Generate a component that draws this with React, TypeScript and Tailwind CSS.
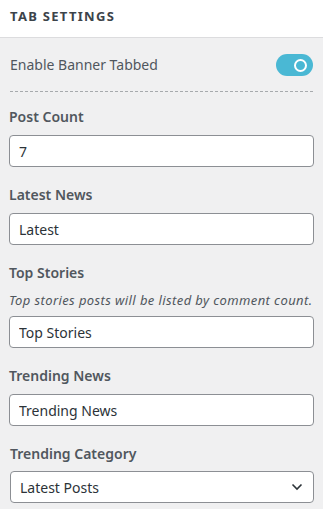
import { useState } from "react";

function Field({ label, value, desc }: { label: string; value: string; desc?: string }) {
    const [val, setVal] = useState(value);
    return (
        <div className="mt-[18px]">
            <div className="text-[14px] leading-[20px] font-semibold text-[#50575e]">{label}</div>
            {desc && (
                <div className="mt-[8px] text-[13px] leading-[18px] italic tracking-[0.4px] text-[#50575e] whitespace-nowrap">
                    {desc}
                </div>
            )}
            <input
                value={val}
                onChange={(e) => setVal(e.target.value)}
                className={`${desc ? "mt-[7px]" : "mt-[8px]"} block w-full h-[32px] px-[9px] bg-white border border-[#8c8f94] rounded-[4px] text-[14px] text-[#2c3338] outline-none`}
            />
        </div>
    );
}

export default function App() {
    const [on, setOn] = useState(true);

    return (
        <div className="w-[323px] h-[509px] bg-[#f0f0f1] overflow-hidden font-['Noto_Sans',sans-serif]">
            <div className="h-[38px] bg-white border-b border-[#dcdcde] px-[10px] pt-[7px]">
                <h2 className="text-[13px] leading-[18px] font-bold tracking-[1.3px] text-[#3c434a]">TAB SETTINGS</h2>
            </div>

            <div className="px-[10px]">
                <div className="pt-[16px] pb-[15px] border-b border-dashed border-[#a7aaad] flex items-center justify-between">
                    <span className="text-[14px] leading-[22px] text-[#50575e]">Enable Banner Tabbed</span>
                    <button
                        onClick={() => setOn(!on)}
                        className={`w-[37px] h-[22px] rounded-full flex items-center px-[6px] ${on ? "bg-[#4ab8d4] justify-end" : "bg-[#c3c4c7] justify-start"}`}
                    >
                        <span className="w-[13px] h-[13px] rounded-full border-2 border-white" />
                    </button>
                </div>
            </div>

            <div className="px-[9px] -mt-[3px]">
                <Field label="Post Count" value="7" />
                <Field label="Latest News" value="Latest" />
                <Field
                    label="Top Stories"
                    value="Top Stories"
                    desc="Top stories posts will be listed by comment count."
                />
                <Field label="Trending News" value="Trending News" />

                <div className="mt-[18px] ml-px">
                    <div className="text-[14px] leading-[20px] font-semibold text-[#50575e]">Trending Category</div>
                    <div className="mt-[7px] relative h-[32px] bg-white border border-[#8c8f94] rounded-[4px] flex items-center justify-between pl-[9px] pr-[10px]">
                        <span className="text-[14px] text-[#2c3338]">Latest Posts</span>
                        <svg width="12" height="8" viewBox="0 0 12 8" fill="none">
                            <path d="M1.5 1.5 L6 6 L10.5 1.5" stroke="#2c3338" strokeWidth="1.6" />
                        </svg>
                    </div>
                </div>
            </div>
        </div>
    );
}
